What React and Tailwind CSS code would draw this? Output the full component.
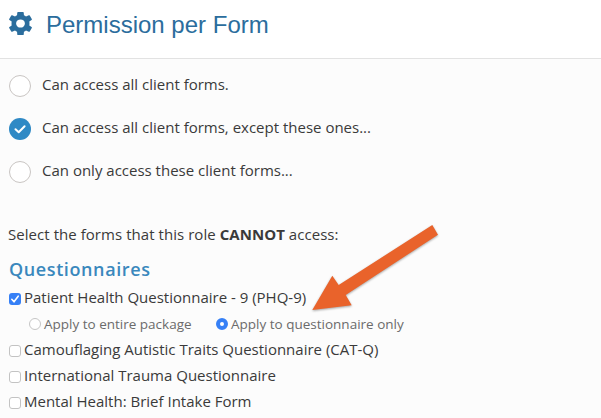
import React, { useState } from 'react'

const accessOptions = [
  { id: 'all', label: 'Can access all client forms.' },
  { id: 'except', label: 'Can access all client forms, except these ones...' },
  { id: 'only', label: 'Can only access these client forms...' },
]

const otherForms = [
  'Camouflaging Autistic Traits Questionnaire (CAT-Q)',
  'International Trauma Questionnaire',
  'Mental Health: Brief Intake Form',
]

const GearIcon = ({ className }) => (
  <svg viewBox="1.3 0.5 21.4 23" preserveAspectRatio="none" className={className} fill="currentColor">
    <path
      fillRule="evenodd"
      d="M9 1.1Q9.1.5 9.7.5H14.3Q14.9.5 15 1.1L15.2 3.8Q16.2 4.3 17.1 5L19.7 3.8Q20.3 3.5 20.6 4L22.5 7.6Q22.8 8.1 22.3 8.5L20.2 10.1Q20.5 12 20.2 13.9L22.3 15.5Q22.8 15.9 22.5 16.4L20.6 20Q20.3 20.5 19.7 20.2L17.1 19Q16.2 19.7 15.2 20.2L15 22.9Q14.9 23.5 14.3 23.5H9.7Q9.1 23.5 9 22.9L8.8 20.2Q7.8 19.7 6.9 19L4.3 20.2Q3.7 20.5 3.4 20L1.5 16.4Q1.2 15.9 1.7 15.5L3.8 13.9Q3.5 12 3.8 10.1L1.7 8.5Q1.2 8.1 1.5 7.6L3.4 4Q3.7 3.5 4.3 3.8L6.9 5Q7.8 4.3 8.8 3.8ZM12 7.9A4.1 4.1 0 1 0 12 16.1A4.1 4.1 0 1 0 12 7.9Z"
    />
  </svg>
)

const CheckBox = ({ checked }) => (
  <span
    className={`mt-[6px] flex h-3 w-3 flex-shrink-0 items-center justify-center rounded-[3px] ${
      checked ? 'bg-[#3680f6]' : 'border border-[#c3c3c3] bg-white'
    }`}
  >
    {checked && (
      <svg viewBox="0 0 12 12" className="h-3 w-3">
        <path d="M2.8 6.3L5 8.8L9.2 3.2" fill="none" stroke="white" strokeWidth="1.6" strokeLinecap="round" strokeLinejoin="round" />
      </svg>
    )}
  </span>
)

const AccessOption = ({ label, selected, onSelect }) => (
  <div onClick={onSelect} className="flex h-[43px] cursor-pointer items-start">
    <span
      className={`mt-[10px] flex h-[22px] w-[22px] flex-shrink-0 items-center justify-center rounded-full ${
        selected ? 'bg-[#2f89c5]' : 'border border-[#c9c5c3] bg-white'
      }`}
    >
      {selected && (
        <svg viewBox="0 0 22 22" className="h-[22px] w-[22px]">
          <path d="M6.5 11.2L9.7 14.2L15.6 8.2" fill="none" stroke="white" strokeWidth="2" strokeLinecap="round" strokeLinejoin="round" />
        </svg>
      )}
    </span>
    <span className="ml-[11px] mt-[9px] text-[15px] leading-5">{label}</span>
  </div>
)

const ScopeOption = ({ label, selected, onSelect }) => (
  <div onClick={onSelect} className="flex cursor-pointer items-start">
    <span
      className={`mt-[5px] h-3 w-3 flex-shrink-0 rounded-full bg-white ${
        selected ? 'border-4 border-[#3680f6]' : 'border border-[#c6c6c6]'
      }`}
    />
    <span className="ml-[3px] text-[13.5px] leading-[22px]">{label}</span>
  </div>
)

const App = () => {
  const [access, setAccess] = useState('except')
  const [scope, setScope] = useState('questionnaire')

  return (
    <div className="relative flex h-[418px] w-[601px] flex-col overflow-hidden whitespace-nowrap bg-[#fcfcfc] font-['Open_Sans',sans-serif] text-[#3a3a3a]">
      <header className="flex h-[59px] flex-shrink-0 items-start border-b border-[#e2e2e2] bg-white pl-[9px] text-[#2b6d9d]">
        <GearIcon className="mt-3 h-[23px] w-[23px] flex-shrink-0" />
        <h1 className="ml-[14px] mt-[9px] font-['Liberation_Sans',sans-serif] text-[24px] leading-8">Permission per Form</h1>
      </header>

      <main className="flex flex-col pl-[9px] pt-[6px]">
        {accessOptions.map((option) => (
          <AccessOption
            key={option.id}
            label={option.label}
            selected={access === option.id}
            onSelect={() => setAccess(option.id)}
          />
        ))}

        <p className="-ml-px mt-[30px] text-[15px] leading-5 tracking-[0.05px]">
          Select the forms that this role <strong className="font-bold">CANNOT</strong> access:
        </p>
        <h2 className="mt-[13px] text-[18px] font-semibold leading-6 tracking-[0.6px] text-[#3a88bd]">Questionnaires</h2>

        <div className="mt-[6px] flex h-[26px] items-start">
          <CheckBox checked />
          <span className="ml-[3px] text-[15px] leading-5">Patient Health Questionnaire - 9 (PHQ-9)</span>
        </div>
        <div className="flex h-[26px] items-start pl-5 text-[#6b6b6b]">
          <div className="w-[187px]">
            <ScopeOption label="Apply to entire package" selected={scope === 'package'} onSelect={() => setScope('package')} />
          </div>
          <ScopeOption
            label="Apply to questionnaire only"
            selected={scope === 'questionnaire'}
            onSelect={() => setScope('questionnaire')}
          />
        </div>
        {otherForms.map((label) => (
          <div key={label} className="flex h-[26px] items-start">
            <CheckBox />
            <span className="ml-[3px] text-[15px] leading-5">{label}</span>
          </div>
        ))}
      </main>

      {/* Callout arrow */}
      <svg viewBox="0 0 140 100" className="pointer-events-none absolute left-[305px] top-[220px] h-[100px] w-[140px] drop-shadow-[0_1px_1px_rgba(0,0,0,0.35)]">
        <path d="M127.3 5L133 14.7L40.7 75L46.7 85.3L7.3 90L27.3 55.7L33.7 65Z" fill="#e9632b" />
      </svg>
    </div>
  )
}

export default App
